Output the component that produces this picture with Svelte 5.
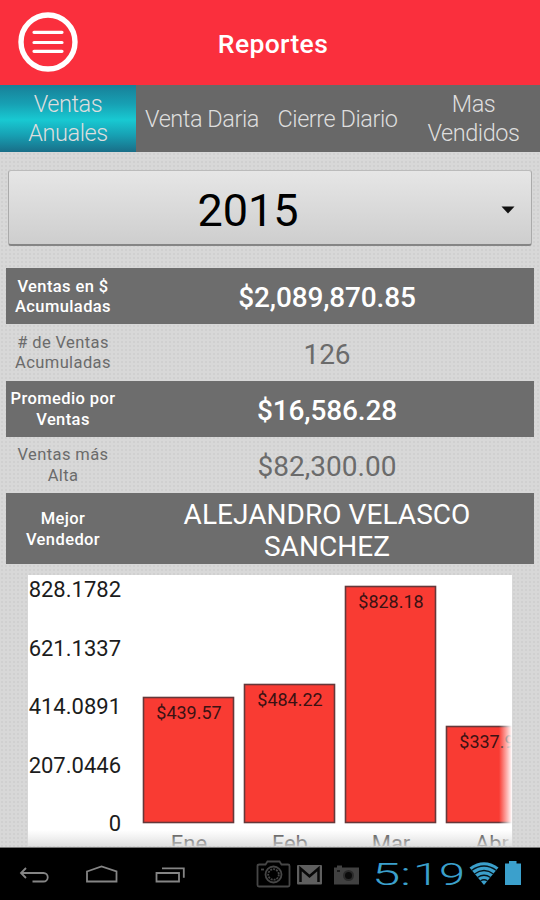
<script>
  let tabs = ['Ventas Anuales', 'Venta Daria', 'Cierre Diario', 'Mas Vendidos'];
  let activeTab = 'Ventas Anuales';
  let year = '2015';

  let rows = [
    { label: ['Ventas en $', 'Acumuladas'], value: ['$2,089,870.85'] },
    { label: ['# de Ventas', 'Acumuladas'], value: ['126'] },
    { label: ['Promedio por', 'Ventas'], value: ['$16,586.28'] },
    { label: ['Ventas más', 'Alta'], value: ['$82,300.00'] },
    { label: ['Mejor', 'Vendedor'], value: ['ALEJANDRO VELASCO', 'SANCHEZ'] },
  ];

  let months = [
    { name: 'Ene', total: 439.57 },
    { name: 'Feb', total: 484.22 },
    { name: 'Mar', total: 828.18 },
    { name: 'Abr', total: 337.95 },
  ];
  let axis = ['828.1782', '621.1337', '414.0891', '207.0446', '0'];

  const BASE = 247.5;
  const barHeight = (total) => Math.round((total / 828.18) * 236);
  const barX = (i) => 115.5 + i * 101;
</script>

<div class="screen">
  <header>
    <button class="menu" aria-label="Menu">
      <svg width="62" height="62" viewBox="0 0 62 62">
        <circle cx="31" cy="31" r="27" fill="none" stroke="#fff" stroke-width="5.4" />
        <path d="M17 21.3h28M17 31.5h28M17 40.3h28" stroke="#fff" stroke-width="3.2" stroke-linecap="round" />
      </svg>
    </button>
    <h1>Reportes</h1>
  </header>

  <nav class="tabs">
    {#each tabs as tab}
      <button class="tab" class:active={tab === activeTab} on:click={() => (activeTab = tab)}>{tab}</button>
    {/each}
  </nav>

  <main>
    <button class="select">
      <span class="year">{year}</span>
      <svg width="14" height="8" viewBox="0 0 14 8"><path d="M0.5 0.5h13L7 7.5z" fill="#111" /></svg>
    </button>

    <div class="rows">
      {#each rows as row, i}
        <div class="row" class:dark={i % 2 === 0} class:tall={row.value.length > 1}>
          <div class="label">
            {#each row.label as line}<div>{line}</div>{/each}
          </div>
          <div class="value">
            {#each row.value as line}<div>{line}</div>{/each}
          </div>
        </div>
      {/each}
    </div>

    <svg class="chart" width="484" height="271" viewBox="0 0 484 271">
      <defs>
        <linearGradient id="fadeRight" x1="0" x2="1" y1="0" y2="0">
          <stop offset="0" stop-color="#fff" stop-opacity="0" />
          <stop offset="1" stop-color="#fff" />
        </linearGradient>
        <linearGradient id="fadeBottom" x1="0" x2="0" y1="0" y2="1">
          <stop offset="0" stop-color="#ddd" stop-opacity="0" />
          <stop offset="1" stop-color="#d8d8d8" stop-opacity="0.8" />
        </linearGradient>
      </defs>
      <rect width="484" height="271" fill="#fff" />
      {#each axis as mark, i}
        <text class="mark" x="93" y={22 + i * 58.6} text-anchor="end">{mark}</text>
      {/each}
      {#each months as month, i}
        <rect x={barX(i)} y={BASE - barHeight(month.total)} width="90" height={barHeight(month.total)} fill="#f93b33" stroke="#65383a" stroke-width="1.6" />
        <text class="total" x={barX(i) + 45.5} y={BASE - barHeight(month.total) + 21.5} text-anchor="middle">${month.total}</text>
        <text class="month" x={barX(i) + 45.5} y="275.5" text-anchor="middle">{month.name}</text>
      {/each}
      <rect x="471" width="13" height="271" fill="url(#fadeRight)" />
      <rect y="255" width="484" height="16" fill="url(#fadeBottom)" />
    </svg>
  </main>

  <footer>
    <svg width="540" height="53" viewBox="0 0 540 53">
      <g fill="none" stroke="#858585" stroke-width="1.8">
        <path d="M26 20l-5 5 5 5M21.5 25H43.500a4 4 0 0 1 0 8.500H32.500" />
        <path d="M87 23.500L101.500 18.500 116.500 23.500V33.500H87z" />
        <path d="M156.500 25h22.500v8.500h-22.500zM162 20.300h21.800v9.500" />
      </g>
      <g fill="none" stroke="#464646" stroke-width="1.8">
        <path d="M259.500 16.500h6l2-3h12l2 3h6.500q1.500 0 1.500 1.500v19q0 1.500-1.500 1.500h-29q-1.500 0-1.500-1.500v-19q0-1.500 2-1.500z" />
        <circle cx="273.500" cy="26.500" r="8" />
        <circle cx="273.500" cy="26.500" r="5.300" stroke-dasharray="2 1" />
        <path d="M261 21.500h3" />
      </g>
      <rect x="297" y="17" width="25" height="19.500" rx="1" fill="#5f5f5f" />
      <path d="M300.500 34V20.500l9 7.800 9-7.800V34" fill="none" stroke="#080808" stroke-width="2.500" />
      <path d="M334 19.500h3v-2h5v2h17V36.500h-25z" fill="#414141" />
      <circle cx="348.500" cy="27.500" r="5.500" fill="#2a2a2a" />
      <circle cx="348.500" cy="27.500" r="3.500" fill="#0b0b0b" />
      <path d="M337 23h3" stroke="#111" stroke-width="1.5" />
      <g class="clock">
        <text x="372" y="37" textLength="39" lengthAdjust="spacingAndGlyphs">5:</text>
        <text x="413" y="37" textLength="52" lengthAdjust="spacingAndGlyphs">19</text>
      </g>
      <path d="M469.500 19.500Q484 9 498.500 19.500L484 37z" fill="#3ba0cc" />
      <g fill="none" stroke="#06141b" stroke-width="1.3">
        <path d="M471.500 22.500Q484 13.500 496.500 22.500" />
        <path d="M474.500 26Q484 19 493.500 26" />
        <path d="M477.500 29.500Q484 25 490.500 29.500" />
        <path d="M480.500 33Q484 30.500 487.500 33" />
      </g>
      <path d="M505 15.500h4v-2.500h7.500v2.500h4.500V37h-16z" fill="#3ba0cc" />
    </svg>
  </footer>
</div>

<style>
  :global(body) {
    margin: 0;
  }

  .screen {
    width: 540px;
    height: 900px;
    display: flex;
    flex-direction: column;
    overflow: hidden;
    font-family: Roboto, 'Liberation Sans', sans-serif;
    background-color: #d8d8d8;
    background-image: radial-gradient(circle, #d0d0d0 0.7px, transparent 1.2px);
    background-size: 4px 4px;
  }

  button {
    font-family: inherit;
    border: none;
    margin: 0;
    padding: 0;
    cursor: pointer;
  }

  header {
    height: 85px;
    flex: none;
    display: grid;
    grid-template-columns: 78px 1fr 72px;
    align-items: center;
    background: #fa2f3d;
  }

  .menu {
    background: none;
    height: 62px;
    margin-bottom: 2px;
    padding-left: 17px;
    text-align: left;
    line-height: 0;
  }

  h1 {
    margin: 3px 0 0;
    color: #fff;
    font-size: 26.5px;
    font-weight: 500;
    line-height: 32px;
    letter-spacing: 0.35px;
    text-align: center;
  }

  .tabs {
    height: 67px;
    flex: none;
    display: grid;
    grid-template-columns: 136px 132px 139px 133px;
    background: #686868;
  }

  .tab {
    padding: 0 8px;
    background: none;
    color: #dedede;
    font-size: 23.5px;
    font-weight: 300;
    line-height: 29px;
    letter-spacing: -0.45px;
    white-space: normal;
  }

  .tab:nth-child(2),
  .tab:nth-child(3) {
    padding: 1px 0 0;
    white-space: nowrap;
  }

  .tab.active {
    background: linear-gradient(#187f98, #17a0b3 28%, #18c9d2 52%, #17a0b3 75%, #196e88);
  }

  main {
    flex: 1;
    min-height: 0;
    display: flex;
    flex-direction: column;
    overflow: hidden;
  }

  .select {
    width: 524px;
    height: 76px;
    flex: none;
    display: flex;
    align-items: center;
    margin: 18px 8px 22px;
    padding: 5px 16px 0 0;
    box-sizing: border-box;
    border: 1px solid #aaa;
    border-top-color: #bbb;
    border-bottom: 2px solid #858585;
    border-radius: 3px;
    background: linear-gradient(#e6e6e6, #cecece);
  }

  .year {
    flex: 1;
    padding: 2px 14px 0 0;
    color: #000;
    font-size: 45px;
    line-height: 50px;
  }

  .rows {
    flex: none;
    padding: 0 6px;
    margin-bottom: 11px;
  }

  .row {
    height: 56.25px;
    display: grid;
    grid-template-columns: 114px 1fr;
    align-items: center;
    color: #6b6b6b;
    text-align: center;
    white-space: nowrap;
  }

  .row.dark {
    background: #6d6d6d;
    color: #fff;
  }

  .row.tall {
    height: 71px;
  }

  .label {
    padding-top: 2px;
    font-size: 16.5px;
    line-height: 20.5px;
    letter-spacing: 0.4px;
  }

  .dark .label {
    font-weight: 500;
  }

  .value {
    padding-top: 5px;
    font-size: 28px;
    line-height: 32.5px;
  }

  .dark .value {
    font-weight: 500;
    letter-spacing: -0.15px;
  }

  .dark.tall .value {
    font-weight: 400;
    letter-spacing: 0.05px;
  }

  .chart {
    flex: none;
    display: block;
    margin-left: 28px;
  }

  .mark,
  .month {
    font-size: 22px;
    fill: #1c1c1c;
  }

  .month {
    fill: #444;
  }

  .total {
    font-size: 18px;
    fill: #3b1213;
  }

  footer {
    height: 53px;
    flex: none;
    background: #000;
    line-height: 0;
    border-top: 1px solid #777;
    box-sizing: border-box;
  }

  .clock {
    font-size: 32px;
    font-weight: 300;
    fill: #3ba0cc;
  }
</style>
